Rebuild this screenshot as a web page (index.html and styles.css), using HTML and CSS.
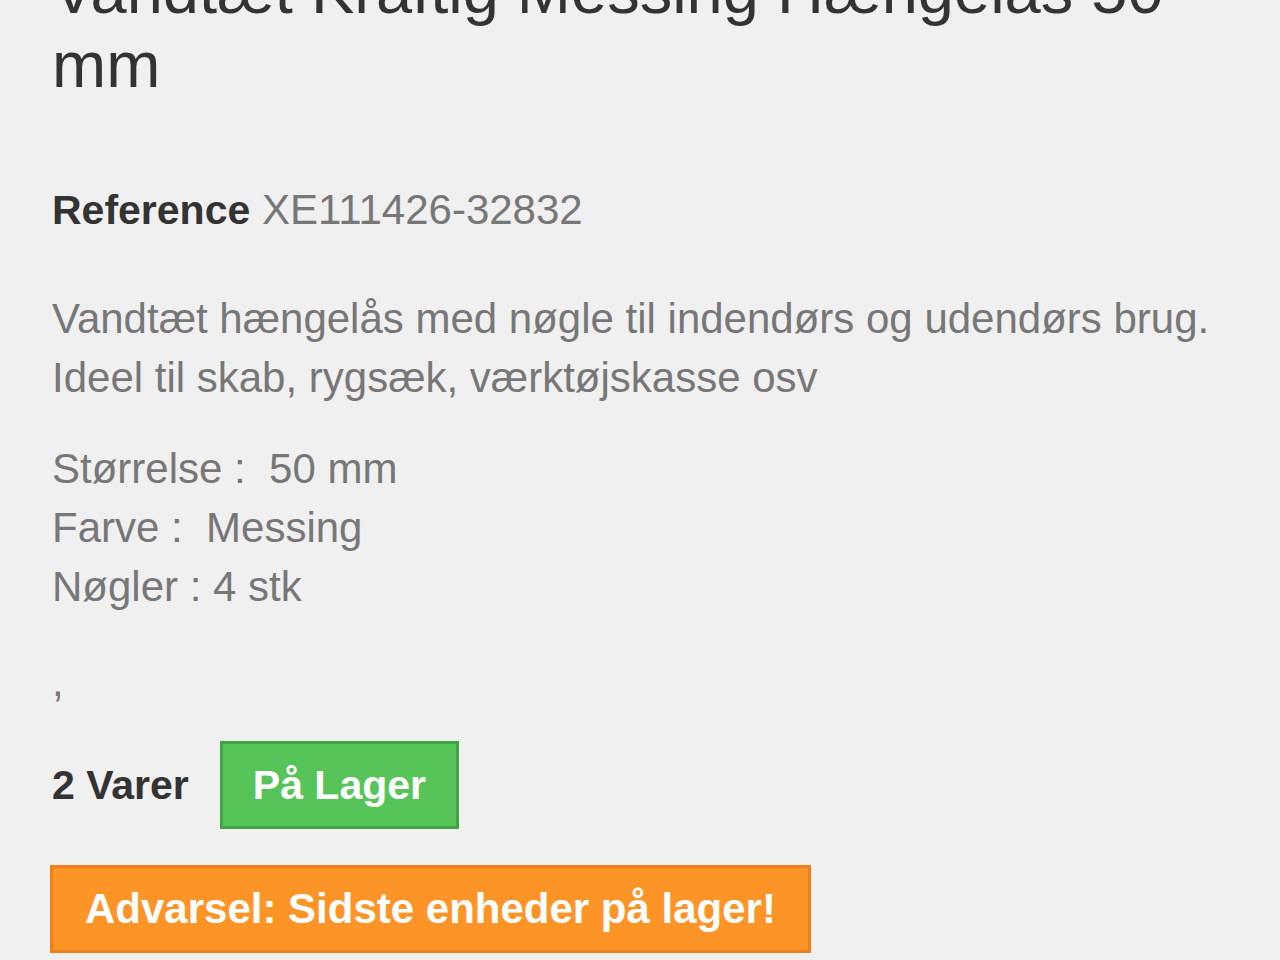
FILE: index.html
```html
<!DOCTYPE html>
<html lang="da">
<head>
    <meta charset="UTF-8">
    <meta name="viewport" content="width=device-width, initial-scale=1.0">
    <title>Vandtæt Kraftig Messing Hængelås 50 mm</title>
    <link rel="stylesheet" href="styles.css">
</head>
<body>
    <div class="product">
        <h1 class="product-title">Vandtæt Kraftig Messing Hængelås 50 mm</h1>

        <div class="product-reference">
            <span class="label">Reference</span> XE111426-32832
        </div>

        <div class="product-description">
            <p>Vandtæt hængelås med nøgle til indendørs og udendørs brug. Ideel til skab, rygsæk, værktøjskasse osv</p>
            <p>Størrelse :&nbsp; 50 mm<br>Farve :&nbsp; Messing<br>Nøgler : 4 stk</p>
        </div>

        <p class="product-extra">,</p>

        <div class="product-stock">
            <span class="quantity">2 Varer</span>
            <span class="stock-badge">På Lager</span>
        </div>

        <div class="stock-warning">Advarsel: Sidste enheder på lager!</div>
    </div>
</body>
</html>
```

FILE: styles.css
```css
body {
    font-family: "Liberation Sans", Arial, sans-serif;
    margin: 0;
    background-color: #f0f0f0;
    color: #777;
}
.product {
    padding: 0 52px;
}
.product-title {
    font-size: 65px;
    font-weight: normal;
    line-height: 74px;
    color: #333;
    margin: -46px 0 0 0;
}
.product-reference {
    font-size: 42px;
    margin-top: 84px;
}
.label {
    font-weight: bold;
    font-size: 41px;
    color: #333;
}
.product-description {
    font-size: 42px;
    line-height: 59px;
    margin-top: 55px;
}
.product-description p {
    margin: 0 0 32px 0;
}
.product-extra {
    font-size: 42px;
    margin: 42px 0 0 0;
}
.product-stock {
    display: flex;
    align-items: center;
    margin-top: 35px;
}
.quantity {
    font-size: 41px;
    font-weight: bold;
    color: #333;
    margin-right: 31px;
}
.stock-badge {
    background-color: #57c45a;
    border: 3px solid #3fa442;
    color: #fff;
    font-size: 41px;
    font-weight: bold;
    line-height: 48px;
    padding: 17px 30px;
}
.stock-warning {
    display: inline-block;
    background-color: #fd9427;
    border: 3px solid #ee7f1a;
    color: #fff;
    font-size: 42px;
    font-weight: bold;
    line-height: 48px;
    padding: 17px 32px;
    margin: 36px 0 0 -2px;
}
```
